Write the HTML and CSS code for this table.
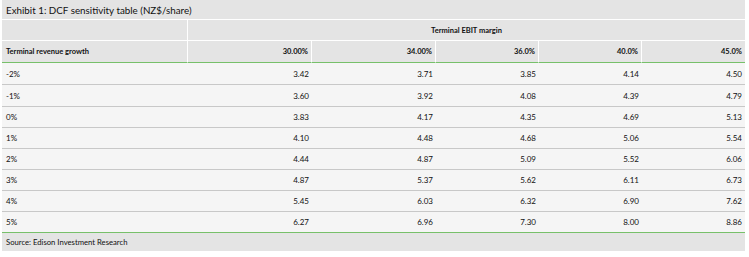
FILE: index.html
```html
<!DOCTYPE html>
<html>
<head>
<meta charset="utf-8">
<link rel="stylesheet" href="styles.css">
</head>
<body>
<div class="exhibit">
  <div class="title">Exhibit 1: DCF sensitivity table (NZ$/share)</div>
  <div class="grid">
    <div class="h1 first"></div>
    <div class="h1 span">Terminal EBIT margin</div>

    <div class="h2 first left">Terminal revenue growth</div>
    <div class="h2">30.00%</div>
    <div class="h2">34.00%</div>
    <div class="h2">36.0%</div>
    <div class="h2">40.0%</div>
    <div class="h2 last">45.0%</div>

    <div class="c tall left">-2%</div><div class="c tall">3.42</div><div class="c tall">3.71</div><div class="c tall">3.85</div><div class="c tall">4.14</div><div class="c tall">4.50</div>
    <div class="c tall left">-1%</div><div class="c tall">3.60</div><div class="c tall">3.92</div><div class="c tall">4.08</div><div class="c tall">4.39</div><div class="c tall">4.79</div>
    <div class="c left">0%</div><div class="c">3.83</div><div class="c">4.17</div><div class="c">4.35</div><div class="c">4.69</div><div class="c">5.13</div>
    <div class="c left">1%</div><div class="c">4.10</div><div class="c">4.48</div><div class="c">4.68</div><div class="c">5.06</div><div class="c">5.54</div>
    <div class="c left">2%</div><div class="c">4.44</div><div class="c">4.87</div><div class="c">5.09</div><div class="c">5.52</div><div class="c">6.06</div>
    <div class="c left">3%</div><div class="c">4.87</div><div class="c">5.37</div><div class="c">5.62</div><div class="c">6.11</div><div class="c">6.73</div>
    <div class="c left">4%</div><div class="c">5.45</div><div class="c">6.03</div><div class="c">6.32</div><div class="c">6.90</div><div class="c">7.62</div>
    <div class="c left lastrow">5%</div><div class="c lastrow">6.27</div><div class="c lastrow">6.96</div><div class="c lastrow">7.30</div><div class="c lastrow">8.00</div><div class="c lastrow">8.86</div>
  </div>
  <div class="source">Source: Edison Investment Research</div>
</div>
</body>
</html>
```

FILE: styles.css
```css
html, body {
  margin: 0;
  padding: 0;
  background: #ffffff;
}
body {
  font-family: Lato, "Open Sans", sans-serif;
  color: #111;
}
.exhibit {
  margin-left: 2px;
  width: 743px;
  background: #f5f5f5;
}
.title {
  height: 19px;
  line-height: 20px;
  background: #e4e4e4;
  font-size: 9.8px;
  padding-left: 4px;
  border-bottom: 1px solid #ffffff;
}
.grid {
  display: grid;
  grid-template-columns: 186px 124px 124px 103px 103px 103px;
}
.h1 {
  height: 20px;
  background: #e4e4e4;
  border-bottom: 1px solid #ffffff;
}
.h1.first {
  border-right: 1px solid #ffffff;
}
.h1.span {
  grid-column: 2 / 7;
  text-align: center;
  font-weight: bold;
  font-size: 7.5px;
  line-height: 21px;
}
.h2 {
  height: 21px;
  background: #e4e4e4;
  border-bottom: 1px solid #77c06a;
  border-right: 1px solid #ffffff;
  font-weight: bold;
  font-size: 7.5px;
  line-height: 22px;
  text-align: right;
  padding-right: 3px;
}
.h2.last {
  border-right: none;
}
.h2.left, .c.left {
  text-align: left;
  padding-left: 4px;
  padding-right: 0;
}
.c {
  height: 20px;
  line-height: 21px;
  border-bottom: 1px solid #c8c8c8;
  font-size: 8px;
  text-align: right;
  padding-right: 3px;
}
.c.tall {
  height: 21px;
  line-height: 22px;
}
.c.lastrow {
  border-bottom: 1px solid #77c06a;
}
.source {
  height: 18px;
  line-height: 18px;
  background: #e4e4e4;
  font-size: 7.7px;
  padding-left: 4px;
}
```
